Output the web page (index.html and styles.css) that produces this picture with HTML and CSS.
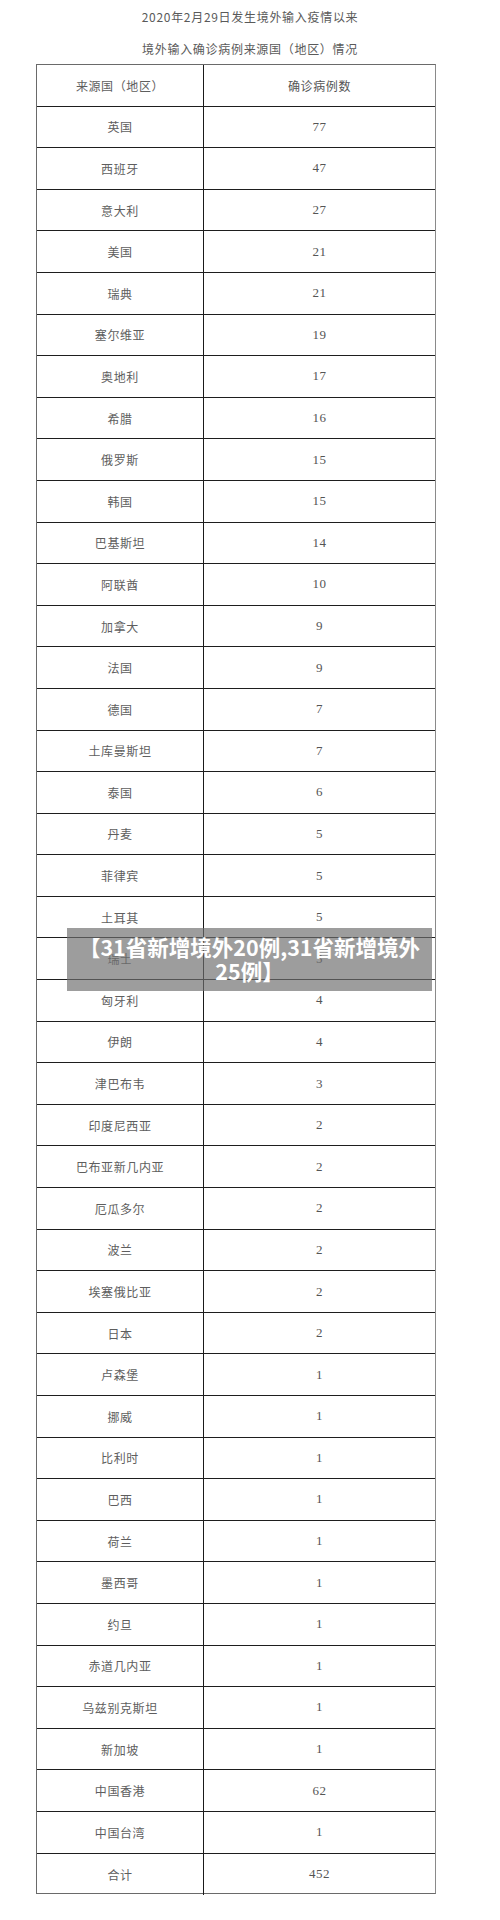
FILE: index.html
```html
<!DOCTYPE html>
<html lang="zh-CN">
<head>
<meta charset="utf-8">
<title>境外输入确诊病例来源国（地区）情况</title>
<link rel="stylesheet" href="styles.css">
</head>
<body>
<div class="page">
  <div class="title">
    <p class="t1">2020年2月29日发生境外输入疫情以来</p>
    <p class="t2">境外输入确诊病例来源国（地区）情况</p>
  </div>
  <div class="table">
    <div class="row head"><div class="c1">来源国（地区）</div><div class="c2">确诊病例数</div></div>
    <div class="row"><div class="c1">英国</div><div class="c2">77</div></div>
    <div class="row"><div class="c1">西班牙</div><div class="c2">47</div></div>
    <div class="row"><div class="c1">意大利</div><div class="c2">27</div></div>
    <div class="row"><div class="c1">美国</div><div class="c2">21</div></div>
    <div class="row"><div class="c1">瑞典</div><div class="c2">21</div></div>
    <div class="row"><div class="c1">塞尔维亚</div><div class="c2">19</div></div>
    <div class="row"><div class="c1">奥地利</div><div class="c2">17</div></div>
    <div class="row"><div class="c1">希腊</div><div class="c2">16</div></div>
    <div class="row"><div class="c1">俄罗斯</div><div class="c2">15</div></div>
    <div class="row"><div class="c1">韩国</div><div class="c2">15</div></div>
    <div class="row"><div class="c1">巴基斯坦</div><div class="c2">14</div></div>
    <div class="row"><div class="c1">阿联酋</div><div class="c2">10</div></div>
    <div class="row"><div class="c1">加拿大</div><div class="c2">9</div></div>
    <div class="row"><div class="c1">法国</div><div class="c2">9</div></div>
    <div class="row"><div class="c1">德国</div><div class="c2">7</div></div>
    <div class="row"><div class="c1">土库曼斯坦</div><div class="c2">7</div></div>
    <div class="row"><div class="c1">泰国</div><div class="c2">6</div></div>
    <div class="row"><div class="c1">丹麦</div><div class="c2">5</div></div>
    <div class="row"><div class="c1">菲律宾</div><div class="c2">5</div></div>
    <div class="row"><div class="c1">土耳其</div><div class="c2">5</div></div>
    <div class="row"><div class="c1">瑞士</div><div class="c2">5</div></div>
    <div class="row"><div class="c1">匈牙利</div><div class="c2">4</div></div>
    <div class="row"><div class="c1">伊朗</div><div class="c2">4</div></div>
    <div class="row"><div class="c1">津巴布韦</div><div class="c2">3</div></div>
    <div class="row"><div class="c1">印度尼西亚</div><div class="c2">2</div></div>
    <div class="row"><div class="c1">巴布亚新几内亚</div><div class="c2">2</div></div>
    <div class="row"><div class="c1">厄瓜多尔</div><div class="c2">2</div></div>
    <div class="row"><div class="c1">波兰</div><div class="c2">2</div></div>
    <div class="row"><div class="c1">埃塞俄比亚</div><div class="c2">2</div></div>
    <div class="row"><div class="c1">日本</div><div class="c2">2</div></div>
    <div class="row"><div class="c1">卢森堡</div><div class="c2">1</div></div>
    <div class="row"><div class="c1">挪威</div><div class="c2">1</div></div>
    <div class="row"><div class="c1">比利时</div><div class="c2">1</div></div>
    <div class="row"><div class="c1">巴西</div><div class="c2">1</div></div>
    <div class="row"><div class="c1">荷兰</div><div class="c2">1</div></div>
    <div class="row"><div class="c1">墨西哥</div><div class="c2">1</div></div>
    <div class="row"><div class="c1">约旦</div><div class="c2">1</div></div>
    <div class="row"><div class="c1">赤道几内亚</div><div class="c2">1</div></div>
    <div class="row"><div class="c1">乌兹别克斯坦</div><div class="c2">1</div></div>
    <div class="row"><div class="c1">新加坡</div><div class="c2">1</div></div>
    <div class="row"><div class="c1">中国香港</div><div class="c2">62</div></div>
    <div class="row"><div class="c1">中国台湾</div><div class="c2">1</div></div>
    <div class="row last"><div class="c1">合计</div><div class="c2">452</div></div>
  </div>
  <div class="caption">【31省新增境外20例,31省新增境外25例】</div>
</div>
</body>
</html>
```

FILE: styles.css
```css
html, body {
  margin: 0;
  padding: 0;
  background: #ffffff;
}

.page {
  position: relative;
  width: 500px;
  height: 1920px;
  font-family: "Noto Sans CJK SC", "Liberation Serif", serif;
  color: #666666;
}

.title {
  display: flex;
  flex-direction: column;
  align-items: center;
}

.title p {
  margin: 0;
  font-size: 12px;
  letter-spacing: 0.7px;
  color: #5a5a5a;
}

.t1 {
  height: 34px;
  line-height: 34px;
}

.t2 {
  margin-top: 3px;
  height: 30px;
  line-height: 30px;
}

.table {
  margin-left: 36px;
  width: 400px;
  border: 1px solid #6a6a6a;
  border-right-color: #8a8a8a;
  box-sizing: border-box;
  display: grid;
  grid-template-rows: repeat(44, 41.6px);
  height: 1830px;
}

.row {
  display: grid;
  grid-template-columns: 167px 1fr;
  border-bottom: 1px solid #1e1e1e;
  box-sizing: border-box;
}

.row.last {
  border-bottom: none;
}

.c1, .c2 {
  display: flex;
  align-items: center;
  justify-content: center;
  font-size: 12px;
  letter-spacing: 0.6px;
}

.c1 {
  border-right: 1.5px solid #1a1a1a;
  color: #5e5e5e;
}

.c2 {
  font-family: "Liberation Serif", "Noto Sans CJK SC", serif;
  font-size: 13px;
  letter-spacing: 0.5px;
  color: #555555;
}

.head .c2 {
  font-family: "Noto Sans CJK SC", sans-serif;
  font-size: 12px;
  letter-spacing: 0.6px;
}

.caption {
  position: absolute;
  left: 67px;
  top: 928px;
  width: 365px;
  height: 63px;
  box-sizing: border-box;
  padding: 7px 8px 0;
  background: rgba(110, 110, 110, 0.68);
  color: #ffffff;
  font-family: "Noto Sans CJK SC", sans-serif;
  font-weight: 700;
  font-size: 21.5px;
  line-height: 24px;
  text-align: center;
}
```
